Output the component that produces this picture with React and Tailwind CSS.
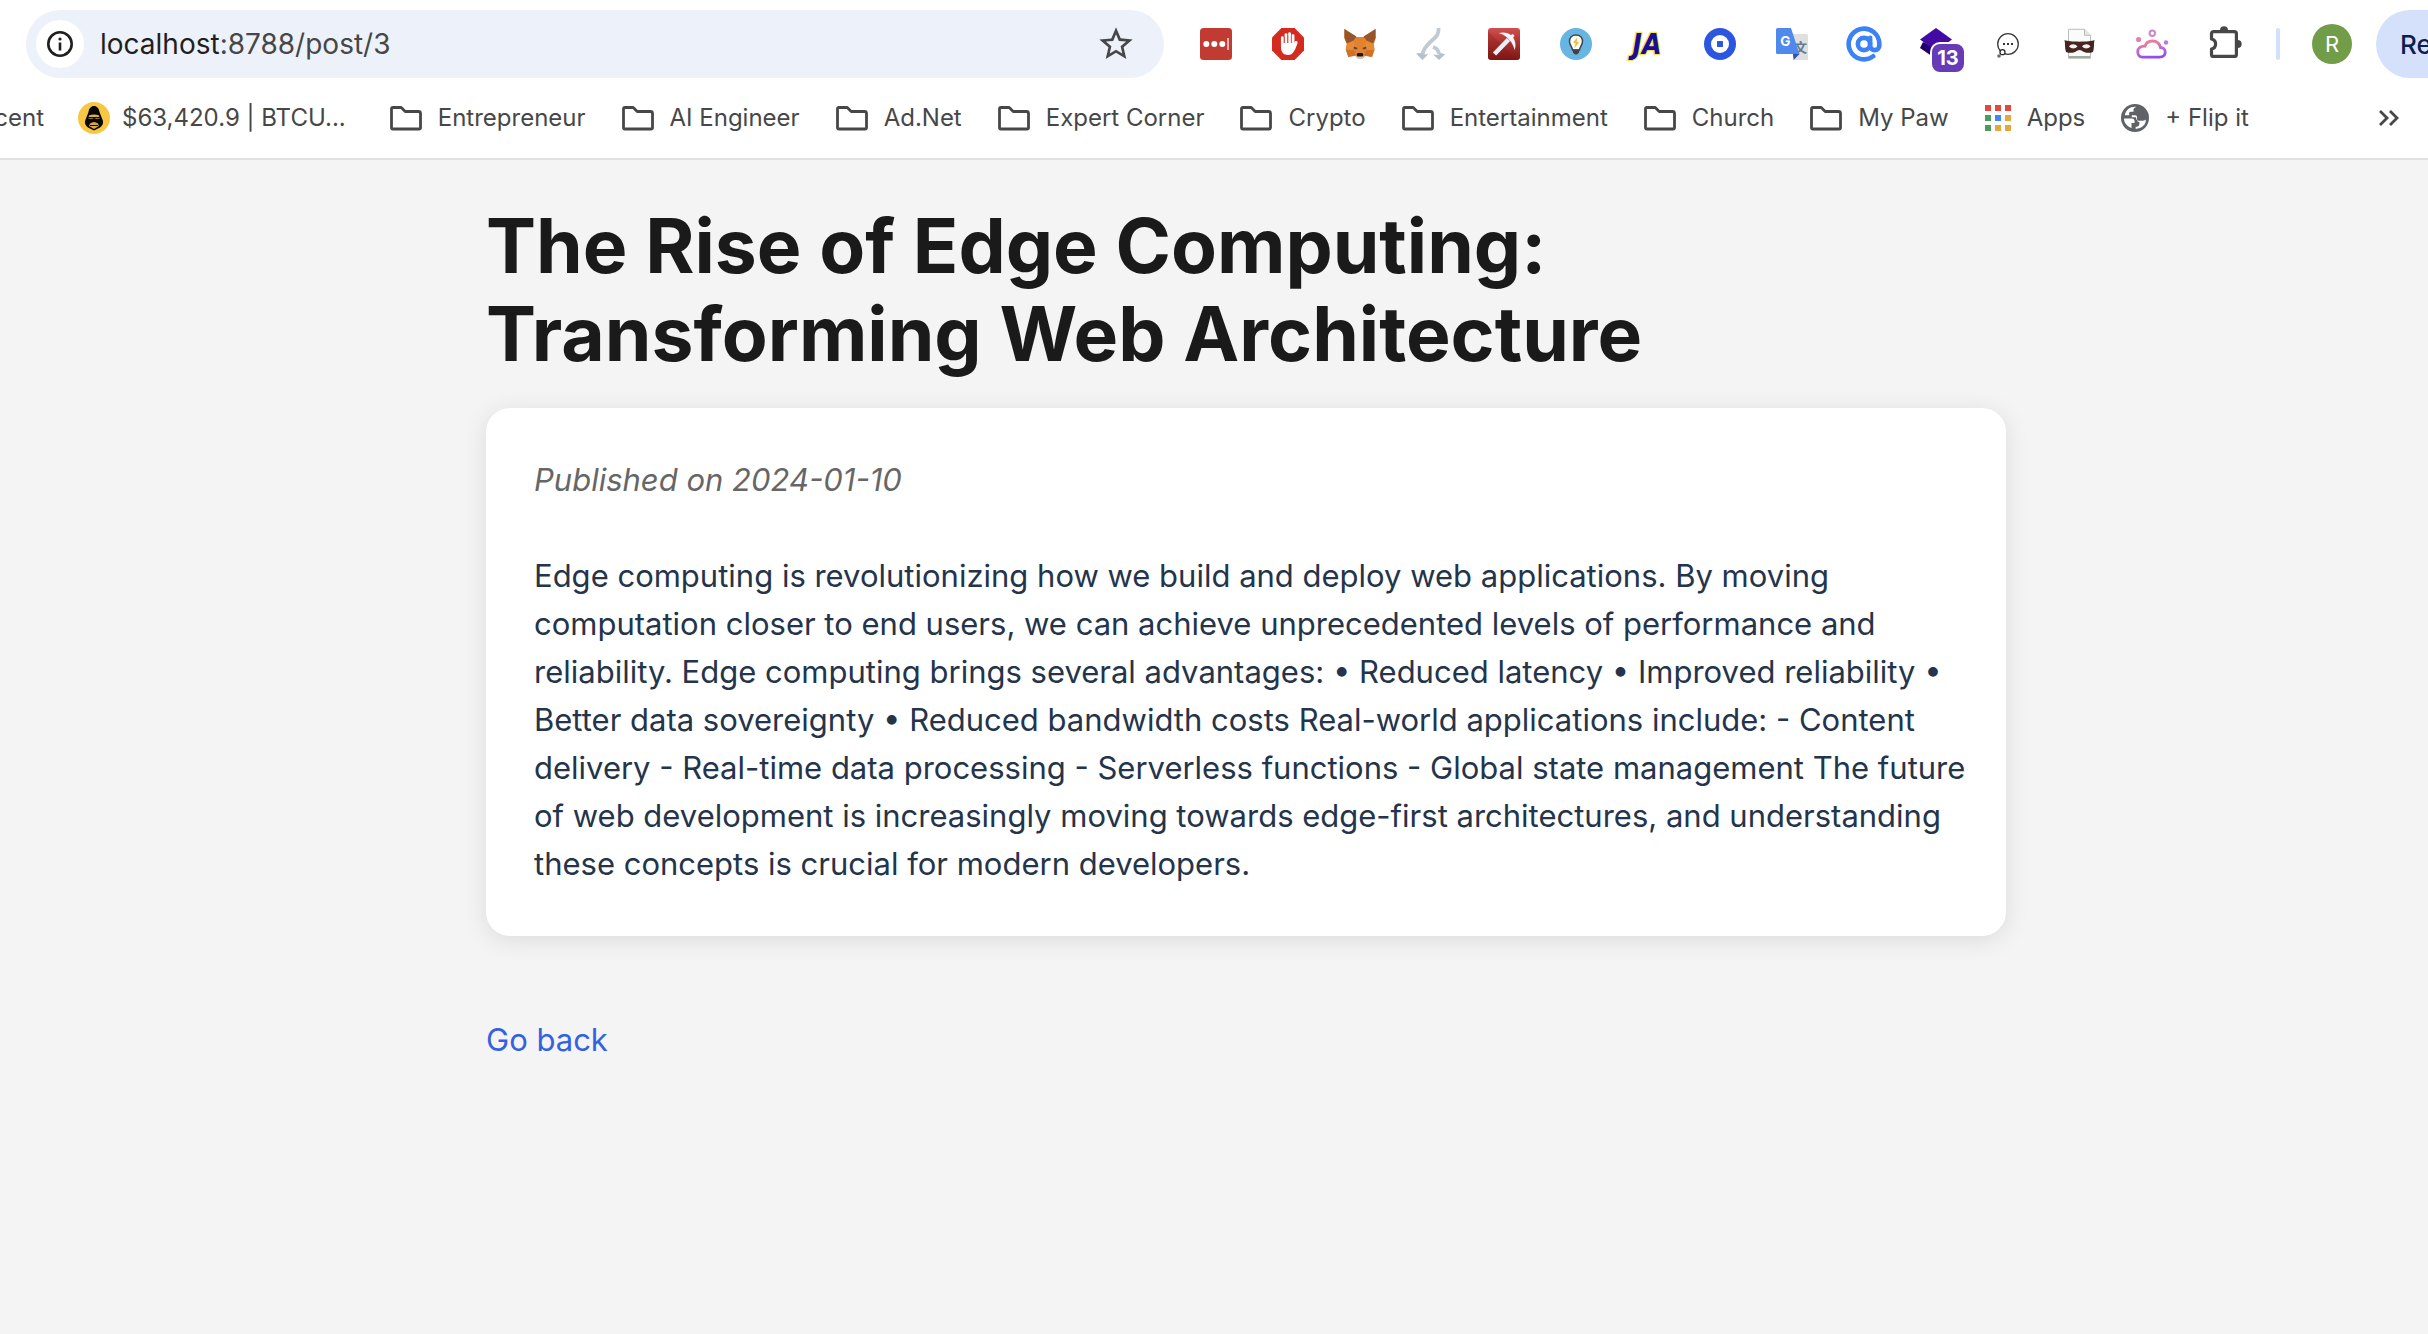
import React from "react";
import { AtSign } from "lucide-react";
import { MdStarOutline } from "react-icons/md";

function Icon({ children, className = "size-8" }) {
  return (
    <svg viewBox="0 0 32 32" fill="none" aria-hidden="true" className={`${className} block overflow-visible`}>
      {children}
    </svg>
  );
}

function PasswordIcon() {
  return (
    <Icon>
      <rect width="32" height="32" rx="3.5" fill="#c23b32" />
      <circle cx="6.3" cy="16" r="3" fill="#fff" />
      <circle cx="14.3" cy="16" r="3" fill="#fff" />
      <circle cx="22.3" cy="16" r="3" fill="#fff" />
      <rect x="27.2" y="10" width="1.7" height="12" fill="#f0c4c0" />
    </Icon>
  );
}

function StopHandIcon() {
  return (
    <Icon>
      <path d="M9.4 0h13.2L32 9.4v13.2L22.6 32H9.4L0 22.6V9.4z" fill="#d52b1e" />
      <g stroke="#fff" strokeWidth="2.9" strokeLinecap="round" strokeLinejoin="round">
        <path d="M10.4 9.6V19M14 6.6V18M17.6 5.6V18M21 7.6V19" />
        <path d="M24 14.6 21.6 21" strokeWidth="3.2" />
      </g>
      <path d="M9 15h13.4l1.8 2-2.2 6c-1.2 2.9-3 4-6 4-4.300 0-7-2.800-7-7z" fill="#fff" />
      <path d="M12.2 8.500v6.500M15.800 7v8M19.300 7.500v7.500" stroke="#d52b1e" strokeWidth=".7" />
    </Icon>
  );
}

function FoxIcon() {
  return (
    <Icon>
      <path d="M.4 1 12 9h8L31.400 1l.5 9-2.200 6 1 5.500-2.500 7.500-6.500-1.600-3.200 3H14l-3.200-3L4.200 29 1.700 21.500l1-5.500L.2 10z" fill="#e2822e" />
      <path d="M.4 1 12.500 8.500 9 13 3 15.500.6 10zM31.600 1 19.500 8.500 23 13l6 2.500L31.400 10z" fill="#96562a" />
      <path d="M3 15.500 9 13l4 6-3.500 3-7.500-.5zM29 15.500 23 13l-4 6 3.500 3 7.500-.5z" fill="#e78a35" />
      <path d="m2 22 8 0 2 5.500L4.500 29zM30 22l-8 0-2 5.500 7.500 1.500z" fill="#cf7128" />
      <path d="M10 18.500 13.500 20l-1 1.500-3-1zM22 18.500 18.500 20l1 1.500 3-1z" fill="#54433a" />
      <path d="M11.500 27h9l-2 3.800h-5z" fill="#cfc4b8" />
      <path d="M13.500 25h5l1 2.500-1 1h-5l-1-1z" fill="#181818" />
    </Icon>
  );
}

function SplitArrowIcon() {
  return (
    <Icon>
      <g stroke="#bfcad3" strokeWidth="3.8">
        <path d="M22.500 0c.5 6-2 8.500-6 12-4 3.600-8.500 7-10 14" />
        <path d="M17 19c3.500 1 5.500 3 6 7" />
      </g>
      <path d="M0 25.500 4.500 25l5 1.500 3-.5L6.500 32zM17 26.500l4.500.5 4-2 3.500 1.500L23 32z" fill="#b4c0ca" />
    </Icon>
  );
}

function PickaxeIcon() {
  return (
    <Icon>
      <defs>
        <linearGradient id="pickaxe-bg" x1="0" y1="0" x2="0" y2="1">
          <stop offset="0" stopColor="#d05050" />
          <stop offset=".5" stopColor="#a82f2c" />
          <stop offset="1" stopColor="#7c1714" />
        </linearGradient>
      </defs>
      <rect width="32" height="32" rx="3" fill="url(#pickaxe-bg)" />
      <path d="M0 3 29 32H3a3 3 0 0 1-3-3z" fill="#7c1714" opacity=".25" />
      <path d="M6.500 26 20.500 11.500" stroke="#eceff7" strokeWidth="4.600" />
      <path d="M10.500 5C16 3.500 20.500 5 23 7l2-1 1.500 1.700-1.300 2C27.500 13 28.300 18 26.500 22 25.500 18 24 14.500 21.500 12L19 9.500C16.500 7 14 6 10.500 5z" fill="#f4f6fb" />
    </Icon>
  );
}

function BulbIcon() {
  return (
    <Icon>
      <circle cx="16" cy="16" r="16" fill="#66b5e3" />
      <path d="M16 7c4.200 0 6.500 2.800 6.500 6.500 0 3.200-2.500 5-3 8.500h-7c-.5-3.500-3-5.300-3-8.500C9.500 9.800 11.800 7 16 7z" fill="#fff" stroke="#454545" strokeWidth="1.500" />
      <path d="M17.500 9 13 14.500l2.500 1L14 20.500l5-6-2.300-1z" fill="#f2c138" />
      <path d="M12.500 21.500h7l-.5 3-2 2h-2l-2-2z" fill="#3c4248" />
    </Icon>
  );
}

function JaIcon() {
  return (
    <Icon>
      <text x="15" y="26" textAnchor="middle" fontFamily="'DejaVu Sans Condensed', 'DejaVu Sans', sans-serif" fontWeight="700" fontStyle="italic" fontSize="28" fill="#1d0a96" stroke="#efe94c" strokeWidth="2.500" strokeLinejoin="round" paintOrder="stroke">
        JA
      </text>
    </Icon>
  );
}

function RecorderIcon() {
  return (
    <Icon>
      <circle cx="16" cy="16" r="16" fill="#2d56e0" />
      <circle cx="16" cy="16" r="9" fill="#fff" />
      <rect x="13" y="13" width="6" height="6" rx=".6" fill="#2d56e0" />
    </Icon>
  );
}

function TranslateIcon() {
  return (
    <Icon>
      <path d="M15 6h15.500A1.500 1.500 0 0 1 32 7.500v23a1.500 1.500 0 0 1-1.500 1.500H18z" fill="#dfdfdf" />
      <text x="24.500" y="23.500" textAnchor="middle" fontFamily="'Noto Sans CJK SC', sans-serif" fontWeight="700" fontSize="13" fill="#607d8b">
        文
      </text>
      <path d="M1.500 0H15l8.500 26H1.500A1.500 1.500 0 0 1 0 24.500v-23A1.500 1.500 0 0 1 1.500 0z" fill="#5089ec" />
      <path d="M17 26h6.500L17.500 32z" fill="#3350b4" />
      <text x="9.200" y="17.800" textAnchor="middle" fontFamily="Inter, sans-serif" fontWeight="700" fontSize="13.500" fill="#fff">
        G
      </text>
    </Icon>
  );
}

function LayersIcon() {
  return (
    <span className="relative block size-8">
      <Icon>
        <path d="M3 14 0 20l16 11 3-10z" fill="#21006b" />
        <path d="M16 0 32 11.500 16 23 0 11.500z" fill="#440aa5" />
      </Icon>
      <span className="absolute left-2.5 top-3.5 flex h-8 w-9 items-center justify-center rounded-[10px] border-2 border-white bg-[#673ab7] text-xl font-bold text-white">
        13
      </span>
    </span>
  );
}

function ThoughtIcon() {
  return (
    <Icon>
      <circle cx="16" cy="16" r="10.300" fill="#fff" stroke="#3c3c3c" strokeWidth="1.300" />
      <circle cx="10.500" cy="24.200" r="2.500" fill="#fff" stroke="#2c2c2c" strokeWidth="1.300" />
      <circle cx="7" cy="28" r="1.800" fill="#6b6b6b" />
      <path d="M11 15h2v2h-2zM15 15h2v2h-2zM19 15h2v2h-2z" fill="#333" />
    </Icon>
  );
}

function MaskIcon() {
  return (
    <Icon>
      <path d="M4.500 1.300h16l6 6v23h-22z" fill="#fbfbfb" stroke="#b9bcb9" />
      <path d="M20.500 1.300v6h6" fill="#e7e9e7" stroke="#b9bcb9" />
      <path d="M5 29h21" stroke="#9dae9f" strokeWidth="2" />
      <path d="M.5 12c5 2.200 25 2.200 30 0-1 4 0 8-1.500 12-4 1.500-8.500 1-11.500-1.500-1.500-.8-2.500-.8-4 0C10.500 25 6 25.500 2 24 .5 20 1.500 16 .5 12z" fill="#46241f" />
      <path d="M5 18.500c2-3 6-3 8.500 0-2.500 2.500-6 2.500-8.500 0zM18 18.500c2.500-3 6.500-3 8.500 0-2.500 2.500-6 2.500-8.500 0z" fill="#f3efee" />
    </Icon>
  );
}

function CloudIcon() {
  return (
    <Icon>
      <defs>
        <linearGradient id="cloud-line" gradientUnits="userSpaceOnUse" x1="14" y1="3" x2="18" y2="31">
          <stop offset="0" stopColor="#c07ad8" />
          <stop offset=".4" stopColor="#ee7c92" />
          <stop offset=".7" stopColor="#b766dc" />
          <stop offset="1" stopColor="#8b45e6" />
        </linearGradient>
      </defs>
      <path d="M6.500 29.200h17c3.500 0 5.700-2 5.700-5 0-2.800-2-4.700-4.700-4.700-1-4-4-6.500-8-6.500-3.500 0-6.500 2-7.500 5.200-4-.4-7.300 1.800-7.300 5.500 0 3.200 2 5.500 4.800 5.500z" stroke="url(#cloud-line)" strokeWidth="2.800" />
      <circle cx="16.300" cy="5.200" r="2.700" stroke="#cf85cc" strokeWidth="2" />
      <circle cx="2.600" cy="11.500" r="2.600" fill="#df83b4" />
      <circle cx="30" cy="14.500" r="2.200" fill="#b57be0" />
    </Icon>
  );
}

function PuzzleIcon() {
  return (
    <Icon>
      <path d="M5.500 3.600H26.400a2 2 0 0 1 2 2V26.400a2 2 0 0 1-2 2H5.500a2 2 0 0 1-2-2V21a5.100 5.100 0 0 0 0-10V5.600a2 2 0 0 1 2-2z" stroke="#474747" strokeWidth="3.200" strokeLinejoin="round" />
      <path d="M12 2.500a4 4.200 0 0 1 8 0zM29.500 12a4.200 4 0 0 1 0 8z" fill="#474747" />
    </Icon>
  );
}

function FolderIcon() {
  return (
    <Icon>
      <path d="M3 5.500h8.200l4 4H28.500a2 2 0 0 1 2 2v14a1.500 1.500 0 0 1-1.500 1.500H3a1.500 1.500 0 0 1-1.500-1.500V7A1.500 1.500 0 0 1 3 5.500z" stroke="#474747" strokeWidth="2.800" strokeLinejoin="round" />
    </Icon>
  );
}

function GorillaIcon() {
  return (
    <Icon>
      <circle cx="16" cy="16" r="16" fill="#f7c744" />
      <path d="M16 4c3 0 5 2.500 5.500 6l3.500 9c.5 3-1 5-3 6.500L16 28.500 10 25.500C8 24 6.500 22 7 19l3.500-9C11 6.500 13 4 16 4z" fill="#050505" />
      <path d="M11 13.500c3-1.500 7-1.500 10 0l.6 3-3.100.5-2.500-1-2.500 1-3.100-.5z" fill="#e2b33c" />
      <path d="M12 21.500c2.500-2 5.500-2 8 0l1 2.500-5 3-5-3z" fill="#d8aa38" />
      <path d="M12 23.500h8M10.500 15.700h11" stroke="#050505" strokeWidth="1.200" />
    </Icon>
  );
}

const APP_DOTS = ["#e2483d", "#e2483d", "#e2483d", "#4c9c5c", "#4285f4", "#e3a73b", "#4c9c5c", "#e3a73b", "#e3a73b"];

function AppsIcon() {
  return (
    <span className="grid grid-cols-3 gap-1">
      {APP_DOTS.map((color, i) => (
        <span key={i} className="size-1.5" style={{ backgroundColor: color }} />
      ))}
    </span>
  );
}

function GlobeIcon() {
  return (
    <Icon className="size-7">
      <circle cx="16" cy="16" r="16" fill="#5f6368" />
      <path d="M3.500 16.500h8.700c2.600 0 3.300 1.700 3.300 3.300v2h-3.500v5.500C6.500 25.500 3.300 21 3.500 16.500z" fill="#fff" />
      <path d="M17.500 3.300c-2 .6-3.200 1.500-3.200 3.500v2H11c-1.600 0-1.700.8-1.700 2.400v1.700h-5C5.500 6.500 11.500 2.300 17.500 3.300z" fill="#fff" />
      <path d="M28.500 17.500c-.5 1.200-1.700 1.500-3.500 1.500h-4.500c-2 0-3.200-1-3.200-2.800v-1.200h-5v-2.100h3.500c2 0 2.600 1 2.600 2.700v2.400c0 1.800 1 2.500 2.600 2.500v1.500c0 2.500-.7 4-4.200 4v2.500c6.500-.3 12-4.700 11.700-11z" fill="#fff" />
    </Icon>
  );
}

const EXTENSIONS = [
  ["Password manager", PasswordIcon],
  ["Content blocker", StopHandIcon],
  ["Wallet", FoxIcon],
  ["Redirects", SplitArrowIcon],
  ["Pickaxe", PickaxeIcon],
  ["Ideas", BulbIcon],
  ["JA", JaIcon],
  ["Recorder", RecorderIcon],
  ["Translate", TranslateIcon],
  ["Mentions", () => <AtSign className="size-8 scale-115 text-[#3b82f6]" strokeWidth={3} />],
  ["Layers", LayersIcon],
  ["Thoughts", ThoughtIcon],
  ["Private file", MaskIcon],
  ["Cloud", CloudIcon],
  ["Extensions", PuzzleIcon],
];

const BOOKMARKS = [
  ["Entrepreneur", FolderIcon],
  ["AI Engineer", FolderIcon],
  ["Ad.Net", FolderIcon],
  ["Expert Corner", FolderIcon],
  ["Crypto", FolderIcon],
  ["Entertainment", FolderIcon],
  ["Church", FolderIcon],
  ["My Paw", FolderIcon],
  ["Apps", AppsIcon],
  ["+ Flip it", GlobeIcon],
];

function Toolbar() {
  return (
    <div className="flex items-center pl-[26px] pt-2.5">
      <div className="flex h-17 min-w-0 flex-1 items-center rounded-full bg-[#edf2fa] pl-2.5 pr-7">
        <button aria-label="Site information" className="flex size-12 shrink-0 items-center justify-center rounded-full bg-white">
          <svg viewBox="0 0 26 26" fill="none" aria-hidden="true" className="size-[26px]">
            <circle cx="13" cy="13" r="11.700" stroke="#1f1f1f" strokeWidth="2.600" />
            <path d="M13 11.500V19.500" stroke="#1f1f1f" strokeWidth="2.600" />
            <circle cx="13" cy="8" r="1.600" fill="#1f1f1f" />
          </svg>
        </button>
        <a href="#post" className="ml-4 flex-1 text-[28px] text-[#474747]">
          <span className="text-[#1f1f1f]">localhost</span>:8788/post/3
        </a>
        <button aria-label="Bookmark this page">
          <MdStarOutline className="size-10 text-[#474747]" />
        </button>
      </div>
      <div className="ml-9 flex shrink-0 items-center gap-10">
        {EXTENSIONS.map(([label, Glyph]) => (
          <button key={label} aria-label={label}>
            <Glyph />
          </button>
        ))}
      </div>
      <span className="ml-9 h-8 w-1 shrink-0 rounded-full bg-[#d3e0fb]" />
      <button className="ml-8 flex size-10 shrink-0 items-center justify-center rounded-full bg-[#729d48] text-[22px] text-white">R</button>
      <button className="ml-6 h-17 w-13 shrink-0 overflow-hidden rounded-l-full bg-[#d5e1fb] pl-6 text-left text-[26px] font-medium text-[#0b1d51]">
        Re
      </button>
    </div>
  );
}

function BookmarksBar() {
  return (
    <nav aria-label="Bookmarks" className="flex h-20 items-center gap-9 whitespace-nowrap text-2xl text-[#474747]">
      <a href="#recent" className="-mr-0.5 flex w-11 justify-end overflow-hidden">cent</a>
      <a href="#btc" className="mr-2 flex items-center gap-3">
        <GorillaIcon />
        $63,420.9 | BTCU...
      </a>
      {BOOKMARKS.map(([label, Glyph]) => (
        <a key={label} href="#bookmark" className="flex items-center gap-4">
          <Glyph />
          {label}
        </a>
      ))}
      <button aria-label="More bookmarks" className="ml-auto mr-7">
        <svg viewBox="0 0 22 18" fill="none" aria-hidden="true" className="h-[18px] w-[22px]">
          <path d="m2 2 7 7-7 7M12 2l7 7-7 7" stroke="#474747" strokeWidth="2.800" />
        </svg>
      </button>
    </nav>
  );
}

export default function App() {
  return (
    <div className="flex min-h-screen flex-col overflow-x-hidden bg-[#f4f4f4] font-['Inter',sans-serif]">
      <header className="border-b-2 border-[#e0e0e0] bg-white">
        <Toolbar />
        <BookmarksBar />
      </header>
      <main className="pl-16 pt-[42px]">
        <div className="mx-auto max-w-[1520px]">
          <h1 className="mb-[30px] max-w-[1300px] text-[75px] leading-[88px] font-bold text-[#1a1a1a]">
            The Rise of Edge Computing: Transforming Web Architecture
          </h1>
          <article className="rounded-3xl bg-white py-12 pr-10 pl-12 shadow-[0_4px_24px_rgba(0,0,0,0.1)]">
            <p className="mb-12 text-[31px] leading-12 text-[#666666] italic">Published on 2024-01-10</p>
            <p className="text-[31px] leading-12 text-[#24344a]">
              Edge computing is revolutionizing how we build and deploy web applications. By moving computation closer to end users, we can achieve
              unprecedented levels of performance and reliability. Edge computing brings several advantages: • Reduced latency • Improved reliability •
              Better data sovereignty • Reduced bandwidth costs Real-world applications include: - Content delivery - Real-time data processing -
              Serverless functions - Global state management The future of web development is increasingly moving towards edge-first architectures, and
              understanding these concepts is crucial for modern developers.
            </p>
          </article>
          <a href="#back" className="mt-20 inline-block text-[31px] leading-12 text-[#3461e3]">
            Go back
          </a>
        </div>
      </main>
    </div>
  );
}
